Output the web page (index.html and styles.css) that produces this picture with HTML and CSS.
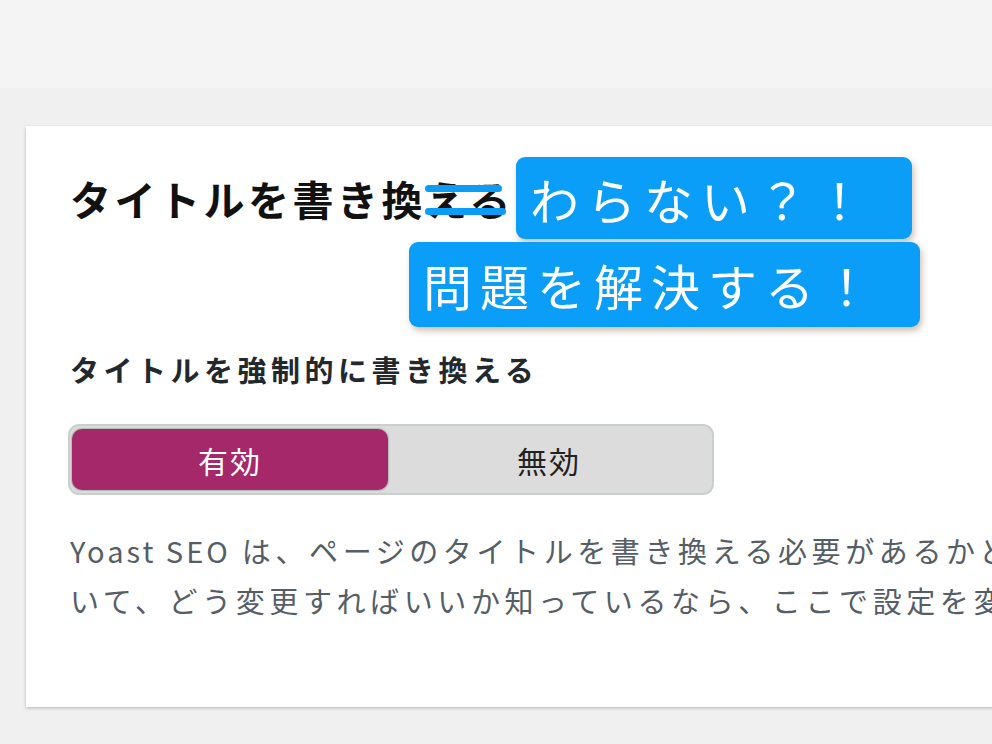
FILE: index.html
```html
<!DOCTYPE html>
<html lang="ja">
<head>
<meta charset="utf-8">
<link rel="stylesheet" href="styles.css">
</head>
<body>
<div class="topband"></div>
<main class="area">
  <section class="card">
    <div class="title-row">
      <h1 class="title">タイトルを書き換<span class="struck">える</span></h1>
      <div class="callout callout-1">わらない？！</div>
      <div class="callout callout-2">問題を解決する！</div>
    </div>
    <h2 class="label">タイトルを強制的に書き換える</h2>
    <div class="toggle">
      <div class="opt opt-on">有効</div>
      <div class="opt opt-off">無効</div>
    </div>
    <p class="desc">
      <span class="line"><span class="latin">Yoast SEO</span> は、ページのタイトルを書き換える必要があるかどうかにつ</span>
      <span class="line">いて、どう変更すればいいか知っているなら、ここで設定を変更できます。</span>
    </p>
  </section>
</main>
</body>
</html>
```
FILE: styles.css
```css
html, body {
  margin: 0;
  padding: 0;
  background: #f0f0f0;
  overflow: hidden;
  width: 992px;
  height: 744px;
  font-family: "Noto Sans CJK JP", "Noto Sans", sans-serif;
}
.topband {
  height: 88px;
  background: #f4f4f4;
}
.area {
  padding: 38px 0 0 26px;
}
.card {
  width: 1100px;
  height: 581px;
  background: #fff;
  box-shadow: 0 1px 3px rgba(0,0,0,0.18), 0 2px 4px rgba(0,0,0,0.06);
  padding: 0 0 0 44px;
  box-sizing: border-box;
  overflow: hidden;
  position: relative;
}
.title-row {
  position: relative;
  height: 200px;
}
.title {
  margin: 0;
  padding-top: 42px;
  font-size: 41px;
  font-weight: 700;
  letter-spacing: 3.5px;
  line-height: 60px;
  color: #111;
  white-space: nowrap;
}
.struck {
  position: relative;
}
.struck::before,
.struck::after {
  content: "";
  position: absolute;
  left: -1px;
  right: 12px;
  height: 7px;
  border-radius: 4px;
  background: #0d9cf5;
}
.struck::before { top: 17px; }
.struck::after { top: 40px; right: 8px; }
.callout {
  position: absolute;
  background: #0a9ef8;
  color: #fff;
  border-radius: 9px;
  font-size: 49px;
  letter-spacing: 8px;
  box-shadow: 2px 4px 6px rgba(120,80,40,0.35);
  box-sizing: border-box;
  white-space: nowrap;
  display: flex;
  align-items: center;
}
.callout-1 {
  left: 446px;
  top: 31px;
  width: 396px;
  height: 82px;
  padding-left: 14px;
}
.callout-2 {
  left: 339px;
  top: 116px;
  width: 511px;
  height: 85px;
  padding-left: 14px;
}
.label {
  margin: 23px 0 0;
  font-size: 29px;
  font-weight: 700;
  letter-spacing: 4.5px;
  color: #23282d;
  line-height: 40px;
}
.toggle {
  margin-top: 35px;
  margin-left: -2px;
  width: 646px;
  height: 71px;
  box-sizing: border-box;
  border: 2px solid #c9cfcc;
  border-radius: 11px;
  background: #dcdcdc;
  display: flex;
  padding: 3px 2px;
}
.opt {
  flex: 0 0 316px;
  display: flex;
  align-items: center;
  justify-content: center;
  font-size: 30px;
  letter-spacing: 2px;
  border-radius: 10px;
}
.opt-on {
  background: #a4286a;
  color: #fff;
  box-shadow: 0 0 1px 1px rgba(90,130,110,0.35);
}
.opt-off {
  flex: 1 1 auto;
  color: #222;
}
.desc {
  margin: 30px 0 0;
  font-size: 29px;
  letter-spacing: 4.6px;
  line-height: 50px;
  color: #555d66;
}
.line {
  display: block;
  white-space: nowrap;
}
.latin {
  letter-spacing: 3px;
}
```
